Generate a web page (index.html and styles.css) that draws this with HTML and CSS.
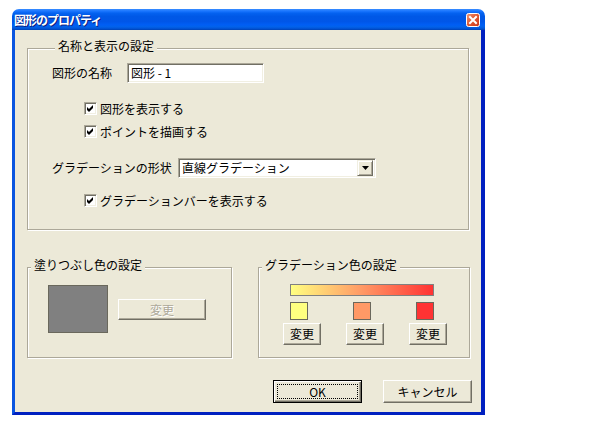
FILE: index.html
```html
<!DOCTYPE html>
<html lang="ja">
<head>
<meta charset="utf-8">
<title>図形のプロパティ</title>
<link rel="stylesheet" href="styles.css">
</head>
<body>
<div class="window">
  <div class="titlebar">
    <span class="title">図形のプロパティ</span>
    <span class="close">
      <svg width="14" height="14" viewBox="0 0 14 14">
        <defs>
          <linearGradient id="cg" x1="0" y1="0" x2="1" y2="1">
            <stop offset="0" stop-color="#f09a7a"/>
            <stop offset="0.5" stop-color="#e0562f"/>
            <stop offset="1" stop-color="#c8361a"/>
          </linearGradient>
        </defs>
        <rect x="0.5" y="0.5" width="13" height="13" rx="2" fill="url(#cg)" stroke="#ffffff"/>
        <path d="M4 4 L10 10 M10 4 L4 10" stroke="#ffffff" stroke-width="2" stroke-linecap="square"/>
      </svg>
    </span>
  </div>
  <div class="frame">
    <div class="client">
      <div class="group group-name">
        <div class="legend">名称と表示の設定</div>
        <div class="row row-name">
          <span class="label label-name">図形の名称</span>
          <span class="field field-name">図形 - 1</span>
        </div>
        <div class="check check-first"><span class="box"><svg width="9" height="9" viewBox="0 0 9 9"><polygon points="1,3 3,5 7,1 7,4 3,8 1,6" fill="#000"/></svg></span><span>図形を表示する</span></div>
        <div class="check check-second"><span class="box"><svg width="9" height="9" viewBox="0 0 9 9"><polygon points="1,3 3,5 7,1 7,4 3,8 1,6" fill="#000"/></svg></span><span>ポイントを描画する</span></div>
        <div class="row row-combo">
          <span class="label label-combo">グラデーションの形状</span>
          <span class="field combo"><span class="combo-text">直線グラデーション</span><span class="drop"><svg width="7" height="4" viewBox="0 0 7 4"><polygon points="0,0 7,0 3.5,4" fill="#000"/></svg></span></span>
        </div>
        <div class="check check-third"><span class="box"><svg width="9" height="9" viewBox="0 0 9 9"><polygon points="1,3 3,5 7,1 7,4 3,8 1,6" fill="#000"/></svg></span><span>グラデーションバーを表示する</span></div>
      </div>

      <div class="groups">
        <div class="group group-fill">
          <div class="legend">塗りつぶし色の設定</div>
          <div class="fill-body">
            <span class="fill-swatch"></span>
            <span class="btn btn-disabled">変更</span>
          </div>
        </div>
        <div class="group group-grad">
          <div class="legend">グラデーション色の設定</div>
          <div class="grad-bar"></div>
          <div class="grad-cols">
            <div class="grad-col"><span class="sw sw-yellow"></span><span class="btn btn-small">変更</span></div>
            <div class="grad-col"><span class="sw sw-salmon"></span><span class="btn btn-small">変更</span></div>
            <div class="grad-col"><span class="sw sw-red"></span><span class="btn btn-small">変更</span></div>
          </div>
        </div>
      </div>

      <div class="actions">
        <span class="btn btn-default"><span class="focus">OK</span></span>
        <span class="btn btn-action">キャンセル</span>
      </div>
    </div>
  </div>
</div>
</body>
</html>
```

FILE: styles.css
```css
* { box-sizing: border-box; }

body {
  margin: 0;
  background: #ffffff;
  font-family: "Noto Sans CJK JP", "Liberation Sans", sans-serif;
  font-size: 12px;
  color: #000000;
}

.window {
  margin: 9px 0 0 12px;
  width: 473px;
  height: 406px;
  display: flex;
  flex-direction: column;
  border-radius: 7px 7px 0 0;
  overflow: hidden;
}

.titlebar {
  height: 21px;
  flex: none;
  display: flex;
  align-items: center;
  justify-content: space-between;
  padding: 0 5px 0 2px;
  background: linear-gradient(to bottom,
    #3a8cff 0%, #1a76ff 10%, #0462f0 20%, #0058e6 35%,
    #0056e8 60%, #005ef4 75%, #0262ea 85%, #0050d0 95%, #0040b0 100%);
}

.title {
  color: #ffffff;
  font-weight: bold;
  font-size: 12px;
  letter-spacing: -1px;
  line-height: 14px;
  text-shadow: 1px 1px 0 #0a1f80;
}

.close {
  display: flex;
  width: 14px;
  height: 14px;
  margin-top: 1px;
}

.frame {
  flex: 1;
  display: flex;
  border-left: 3px solid #0a55e0;
  border-right: 4px solid #0020c0;
  border-bottom: 3px solid #0020c0;
}

.client {
  flex: 1;
  background: #ece9d8;
  padding: 18px 0 0 12px;
}

/* group boxes */
.group {
  border: 1px solid #aca899;
  box-shadow: inset 1px 1px 0 #ffffff, 1px 1px 0 #ffffff;
}

.legend {
  width: fit-content;
  margin: -10px 0 -4px 3px;
  padding: 0 3px;
  height: 14px;
  line-height: 14px;
  background: #ece9d8;
  white-space: nowrap;
}

.group-name {
  width: 442px;
  height: 182px;
  padding-left: 24px;
}

.row {
  display: flex;
  align-items: center;
  height: 20px;
}

.row-name { margin-top: 14px; }
.row-combo { margin-top: 20px; }

.label { white-space: nowrap; line-height: 14px; }
.label-name { width: 75px; }
.label-combo { width: 126px; }

.field {
  height: 20px;
  background: #ffffff;
  border-top: 1px solid #aca899;
  border-left: 1px solid #aca899;
  border-right: 1px solid #ffffff;
  border-bottom: 1px solid #ffffff;
  box-shadow: inset 1px 1px 0 #716f64, inset -1px -1px 0 #f1efe2;
  display: flex;
  align-items: center;
  white-space: nowrap;
  line-height: 14px;
}

.field-name {
  width: 137px;
  padding-left: 3px;
}

.combo {
  width: 198px;
  padding: 0 2px 0 3px;
  justify-content: space-between;
}

.drop {
  width: 16px;
  height: 16px;
  display: flex;
  align-items: center;
  justify-content: center;
  background: #ece9d8;
  border-top: 1px solid #f1efe2;
  border-left: 1px solid #f1efe2;
  border-right: 1px solid #716f64;
  border-bottom: 1px solid #716f64;
  box-shadow: inset 1px 1px 0 #ffffff, inset -1px -1px 0 #aca899;
}

.check {
  display: flex;
  align-items: center;
  gap: 3px;
  height: 13px;
  margin-left: 32px;
  line-height: 14px;
  white-space: nowrap;
}

.check-first { margin-top: 19px; }
.check-second { margin-top: 10px; }
.check-third { margin-top: 16px; }

.box {
  width: 13px;
  height: 13px;
  flex: none;
  display: flex;
  align-items: center;
  justify-content: center;
  background: #ffffff;
  border-top: 1px solid #aca899;
  border-left: 1px solid #aca899;
  border-right: 1px solid #ffffff;
  border-bottom: 1px solid #ffffff;
  box-shadow: inset 1px 1px 0 #716f64, inset -1px -1px 0 #f1efe2;
}

/* lower groups */
.groups {
  display: flex;
  gap: 26px;
  margin-top: 37px;
}

.group-fill {
  width: 205px;
  height: 91px;
}

.group-grad {
  width: 212px;
  height: 91px;
}

.fill-body {
  display: flex;
  align-items: flex-start;
}

.fill-swatch {
  width: 60px;
  height: 48px;
  margin: 17px 0 0 20px;
  background: #808080;
  border: 1px solid #6a685c;
}

.btn {
  display: flex;
  align-items: center;
  justify-content: center;
  background: #ece9d8;
  border-top: 1px solid #ffffff;
  border-left: 1px solid #ffffff;
  border-right: 1px solid #716f64;
  border-bottom: 1px solid #716f64;
  box-shadow: inset -1px -1px 0 #aca899;
  line-height: 14px;
  white-space: nowrap;
}

.btn-disabled {
  width: 88px;
  height: 21px;
  margin: 31px 0 0 10px;
  color: #aca899;
  text-shadow: 1px 1px 0 #ffffff;
}

.grad-bar {
  width: 144px;
  height: 12px;
  margin: 16px 0 0 31px;
  border: 1px solid #808080;
  background: linear-gradient(to right, #ffff80 0%, #ff9966 50%, #ff3333 100%);
}

.grad-cols {
  display: flex;
  gap: 25px;
  margin: 6px 0 0 24px;
}

.grad-col {
  width: 38px;
  display: flex;
  flex-direction: column;
}

.sw {
  width: 18px;
  height: 18px;
  margin-left: 7px;
  border: 1px solid #6a685c;
}

.sw-yellow { background: #ffff80; }
.sw-salmon { background: #ff9966; }
.sw-red { background: #ff3333; }

.btn-small {
  width: 38px;
  height: 22px;
  margin-top: 3px;
}

.actions {
  display: flex;
  gap: 21px;
  margin: 22px 0 0 246px;
}

.btn-action {
  width: 89px;
  height: 23px;
}

.btn-default {
  width: 89px;
  height: 23px;
  border: 1px solid #000000;
  box-shadow: inset 1px 1px 0 #ffffff, inset -1px -1px 0 #716f64, inset -2px -2px 0 #aca899;
  padding: 3px;
}

.focus {
  flex: 1;
  align-self: stretch;
  display: flex;
  align-items: center;
  justify-content: center;
  border: 1px dotted #000000;
  line-height: 12px;
}
```
